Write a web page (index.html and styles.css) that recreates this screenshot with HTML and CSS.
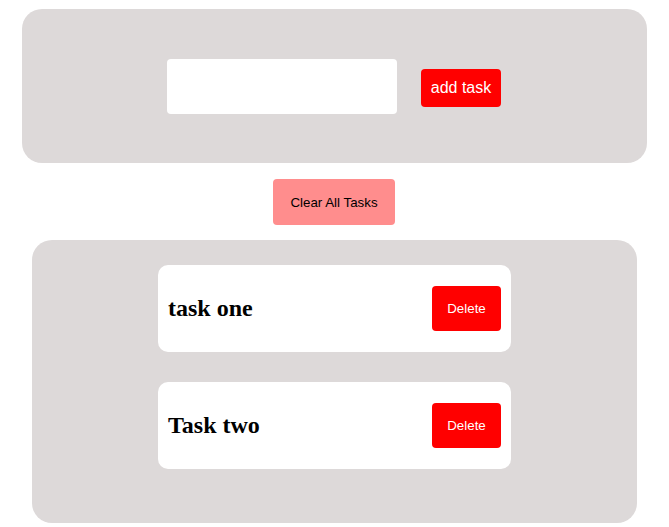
FILE: index.html
```html
<!DOCTYPE html>
<html>
<head>
<meta charset="utf-8">
<link rel="stylesheet" href="styles.css">
</head>
<body>
<div class="input-panel">
  <input class="task-input" type="text">
  <button class="add-btn">add task</button>
</div>
<div class="clear-row">
  <button class="clear-btn">Clear All Tasks</button>
</div>
<div class="list-panel">
  <div class="task-card">
    <h2 class="task-title">task one</h2>
    <button class="delete-btn">Delete</button>
  </div>
  <div class="task-card">
    <h2 class="task-title">Task two</h2>
    <button class="delete-btn">Delete</button>
  </div>
</div>
</body>
</html>
```
FILE: styles.css
```css
html, body {
  margin: 0;
  padding: 0;
  background: #ffffff;
  font-family: "Liberation Sans", Arial, sans-serif;
}
body {
  padding-top: 9px;
}
.input-panel {
  margin: 0 22px;
  padding-right: 1px;
  height: 154px;
  background: #ddd9d9;
  border-radius: 20px;
  display: flex;
  align-items: center;
  justify-content: center;
  gap: 24px;
}
.task-input {
  width: 230px;
  height: 55px;
  box-sizing: border-box;
  border: none;
  border-radius: 4px;
  background: #ffffff;
  outline: none;
  padding: 0 8px;
  font-size: 16px;
}
.add-btn {
  width: 80px;
  height: 38px;
  margin-top: 4px;
  border: none;
  border-radius: 4px;
  background: #ff0000;
  color: #ffffff;
  font-family: "Liberation Sans", Arial, sans-serif;
  font-size: 16px;
  padding: 0;
}
.clear-row {
  display: flex;
  justify-content: center;
  margin-top: 16px;
  padding-right: 1px;
}
.clear-btn {
  width: 122px;
  height: 46px;
  border: none;
  border-radius: 4px;
  background: #ff8d8d;
  color: #000000;
  font-family: "Liberation Sans", Arial, sans-serif;
  font-size: 13.33px;
  padding: 0;
}
.list-panel {
  margin: 15px 32px 0;
  padding: 25px 0 54px;
  background: #ddd9d9;
  border-radius: 20px;
  display: flex;
  flex-direction: column;
  align-items: center;
  gap: 30px;
}
.task-card {
  width: 353px;
  height: 87px;
  box-sizing: border-box;
  background: #ffffff;
  border-radius: 10px;
  padding: 0 10px;
  display: flex;
  align-items: center;
  justify-content: space-between;
}
.task-title {
  margin: 0;
  font-family: "Liberation Serif", "Times New Roman", serif;
  font-size: 24px;
  font-weight: bold;
  color: #000000;
}
.delete-btn {
  width: 69px;
  height: 45px;
  border: none;
  border-radius: 4px;
  background: #ff0000;
  color: #ffffff;
  font-family: "Liberation Sans", Arial, sans-serif;
  font-size: 13.33px;
  padding: 0;
}
```
